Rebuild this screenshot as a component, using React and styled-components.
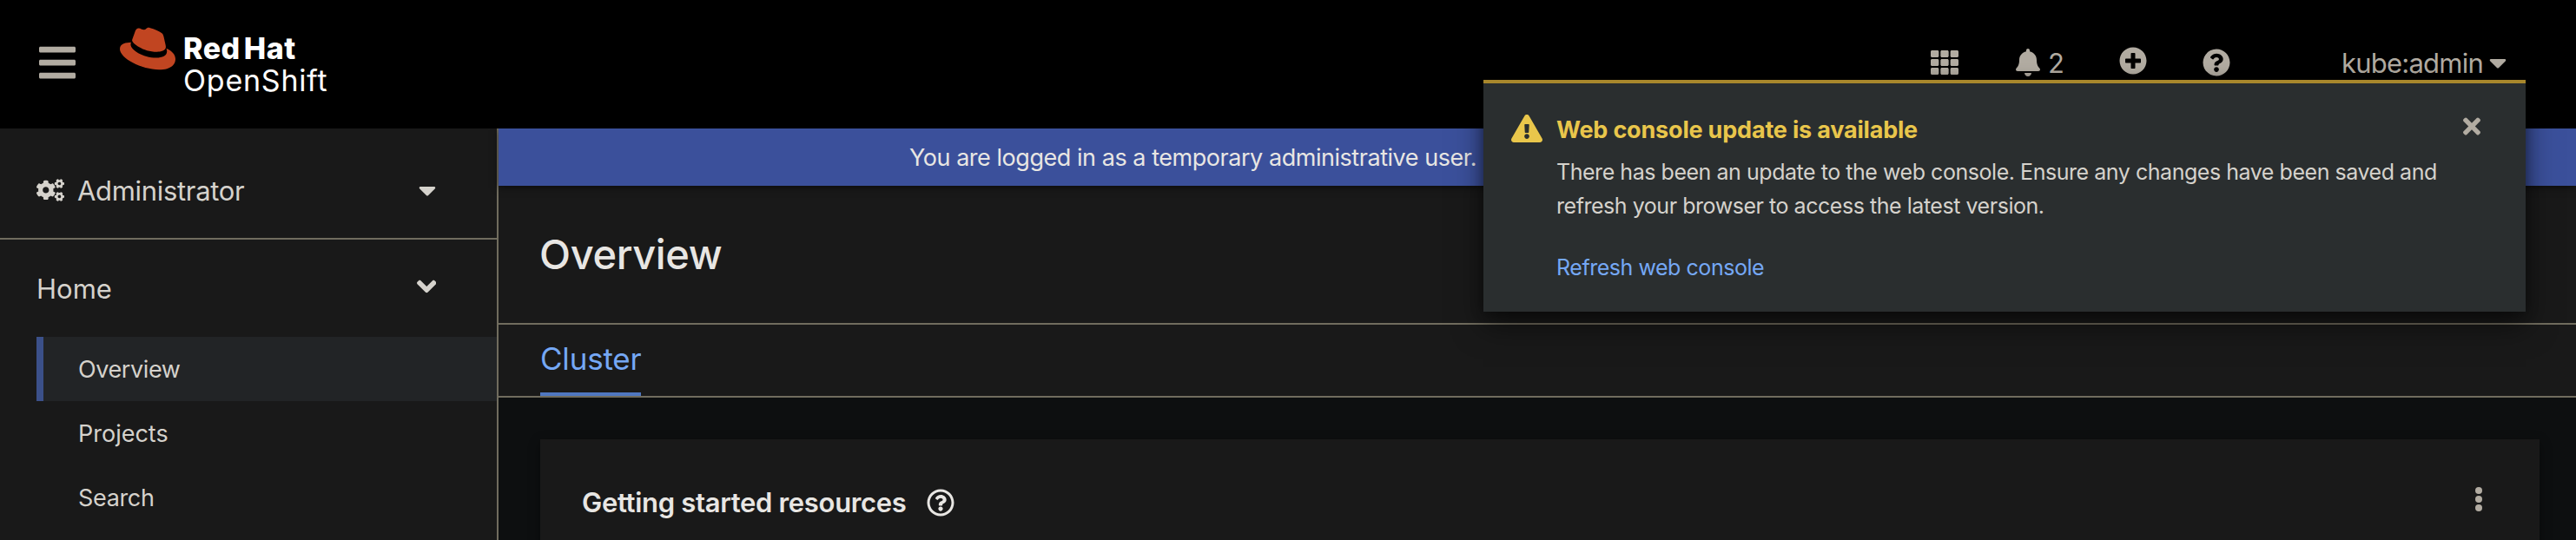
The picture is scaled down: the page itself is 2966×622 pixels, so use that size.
import React from "react";
import styled, { createGlobalStyle } from "styled-components";
import {
  FaAngleDown,
  FaBars,
  FaBell,
  FaCaretDown,
  FaCogs,
  FaExclamationTriangle,
  FaPlusCircle,
  FaQuestionCircle,
  FaRedhat,
  FaRegQuestionCircle,
  FaTh,
  FaTimes,
} from "react-icons/fa";

const color = {
  text: "#e8e6e3",
  nav: "#d5d2cc",
  muted: "#b2aca2",
  line: "#706c5e",
  panel: "#191919",
  canvas: "#0d0f10",
  banner: "#3b509b",
  link: "#75a8f5",
  warning: "#e9c64b",
};

const GlobalStyle = createGlobalStyle`
  *, *::before, *::after { box-sizing: border-box; }
  body {
    margin: 0;
    background: ${color.canvas};
    color: ${color.text};
    font-family: Inter, "Liberation Sans", sans-serif;
    overflow: hidden;
  }
  h1, h2, p { margin: 0; }
  button { font: inherit; color: inherit; background: none; border: 0; padding: 0; }
`;

const Icon = styled.span`
  flex: none;
  display: block;
  svg {
    display: block;
    width: ${(p) => p.$w || 32}px;
    height: ${(p) => p.$h || 32}px;
  }
`;

const Page = styled.div`
  position: relative;
  height: 622px;
  display: flex;
  flex-direction: column;
  overflow: hidden;
`;

const Masthead = styled.header`
  flex: none;
  height: 148px;
  background: #000;
  display: flex;
  align-items: flex-start;
`;

const MenuButton = styled.button`
  margin: 48px 0 0 45px;
  color: ${color.muted};
`;

const Brand = styled.div`
  display: flex;
  align-items: flex-start;
  margin-left: 51px;
  color: #fff;
`;

const BrandHat = styled(Icon)`
  margin-top: 24px;
  color: #c14521;
`;

const BrandName = styled.div`
  margin: 38px 0 0 9px;
  font-size: 34px;
  line-height: 36px;
  white-space: nowrap;
`;

const BrandCompany = styled.div`
  font-weight: 800;
  letter-spacing: 0.5px;
  word-spacing: -4px;
`;

const BrandProduct = styled.div`
  margin-top: 1px;
  letter-spacing: 0.78px;
`;

const Tools = styled.div`
  display: flex;
  margin: 48px 80px 0 auto;
  height: 48px;
  color: ${color.muted};
  font-size: 31px;
`;

const Tool = styled.button`
  width: ${(p) => p.$width || 96}px;
  height: ${(p) => (p.$raised ? 44 : 48)}px;
  display: flex;
  align-items: center;
  justify-content: center;
`;

const Notifications = styled.button`
  width: 121px;
  padding-left: 34px;
  display: flex;
  align-items: center;
`;

const Count = styled.span`
  margin-left: 9px;
`;

const User = styled.button`
  display: flex;
  align-items: center;
  padding-left: 96px;
`;

const UserName = styled.span`
  width: 170px;
  text-align: left;
  white-space: nowrap;
  letter-spacing: -0.77px;
`;

const Body = styled.div`
  flex: 1;
  min-height: 0;
  display: flex;
`;

const Sidebar = styled.nav`
  flex: none;
  width: 574px;
  background: ${color.panel};
  border-right: 2px solid ${color.line};
  color: ${color.nav};
`;

const Perspective = styled.button`
  width: 100%;
  height: 128px;
  padding: 44px 70px 28px 42px;
  border-bottom: 2px solid ${color.line};
  display: flex;
  align-items: center;
  font-size: 31px;
  letter-spacing: -0.32px;
`;

const PerspectiveName = styled.span`
  margin-left: 15px;
  margin-right: auto;
`;

const Section = styled.button`
  width: 100%;
  height: 112px;
  padding: 1px 70px 0 42px;
  display: flex;
  align-items: center;
  justify-content: space-between;
  font-size: 31px;
`;

const SectionChevron = styled(Icon)`
  margin-top: -5px;
`;

const NavItem = styled.a`
  height: 74px;
  margin-left: 42px;
  padding-left: 40px;
  border-left: 8px solid ${(p) => (p.$current ? "#3b5089" : "transparent")};
  background: ${(p) => (p.$current ? "#222426" : "transparent")};
  display: flex;
  align-items: center;
  font-size: 27px;
  letter-spacing: ${(p) => p.$tracking}px;
`;

const Main = styled.main`
  flex: 1;
  min-width: 0;
  display: flex;
  flex-direction: column;
`;

const Banner = styled.div`
  position: relative;
  height: 66px;
  padding-left: 473px;
  background: ${color.banner};
  box-shadow: 0 2px 8px rgba(0, 0, 0, 0.55);
  display: flex;
  align-items: center;
  font-size: 27px;
  letter-spacing: -0.46px;
`;

const PageHeader = styled.div`
  height: 160px;
  padding: 0 0 2px 47px;
  background: ${color.panel};
  border-bottom: 2px solid ${color.line};
  display: flex;
  align-items: center;
`;

const PageTitle = styled.h1`
  font-size: 47px;
  font-weight: 500;
  letter-spacing: -0.37px;
`;

const Tabs = styled.div`
  height: 84px;
  padding-left: 48px;
  background: ${color.panel};
  border-bottom: 2px solid ${color.line};
  display: flex;
`;

const Tab = styled.button`
  width: 116px;
  border-bottom: 4px solid #4f77c0;
  color: ${color.link};
  font-size: 35px;
  letter-spacing: -0.2px;
  text-align: left;
  white-space: nowrap;
`;

const Content = styled.div`
  flex: 1;
  min-height: 0;
  padding: 48px 42px 0 48px;
`;

const Card = styled.section`
  height: 320px;
  background: ${color.panel};
  box-shadow: 0 4px 12px rgba(0, 0, 0, 0.4);
`;

const CardHeader = styled.div`
  height: 145px;
  padding: 0 66px 0 48px;
  display: flex;
  align-items: center;
`;

const CardTitle = styled.h2`
  width: 397px;
  font-size: 31px;
  font-weight: 600;
  letter-spacing: -0.32px;
  white-space: nowrap;
`;

const Kebab = styled.button`
  margin: -7px 0 0 auto;
  display: flex;
  flex-direction: column;
  gap: 1.7px;
  span {
    width: 8px;
    height: 8px;
    border-radius: 50%;
    background: ${color.muted};
  }
`;

const Toast = styled.aside`
  position: absolute;
  top: 92px;
  right: 58px;
  width: 1200px;
  height: 267px;
  padding: 32px 52px 32px 32px;
  border-top: 4px solid #a8872c;
  background: #2a2e2f;
  box-shadow: 0 16px 32px rgba(0, 0, 0, 0.5), 0 0 12px rgba(0, 0, 0, 0.35);
  display: flex;
  align-items: flex-start;
`;

const WarningIcon = styled(Icon)`
  margin-top: 4px;
  color: ${color.warning};
`;

const ToastText = styled.div`
  margin: 1px 0 0 16px;
  flex: 1;
  font-size: 25px;
  line-height: 39px;
  letter-spacing: -0.46px;
  color: ${color.nav};
  white-space: nowrap;
`;

const ToastTitle = styled.h2`
  color: ${color.warning};
  font-size: 27px;
  font-weight: 700;
  line-height: 42px;
  letter-spacing: -0.19px;
  margin-bottom: 8px;
`;

const ToastLink = styled.a`
  display: block;
  margin-top: 32px;
  color: ${color.link};
`;

const CloseButton = styled.button`
  margin-top: 3px;
  color: ${color.muted};
`;

const navItems = [
  { label: "Overview", current: true, tracking: -0.4 },
  { label: "Projects", tracking: 0 },
  { label: "Search", tracking: -0.34 },
];

export default function App() {
  return (
    <Page>
      <GlobalStyle />
      <Masthead>
        <MenuButton aria-label="Toggle navigation">
          <Icon $w={42} $h={48}><FaBars /></Icon>
        </MenuButton>
        <Brand>
          <BrandHat $w={64} $h={64}><FaRedhat /></BrandHat>
          <BrandName>
            <BrandCompany>Red Hat</BrandCompany>
            <BrandProduct>OpenShift</BrandProduct>
          </BrandName>
        </Brand>
        <Tools>
          <Tool aria-label="Applications">
            <Icon><FaTh /></Icon>
          </Tool>
          <Notifications aria-label="Notifications">
            <Icon $w={28}><FaBell /></Icon>
            <Count>2</Count>
          </Notifications>
          <Tool $raised aria-label="Create">
            <Icon><FaPlusCircle /></Icon>
          </Tool>
          <Tool aria-label="Help">
            <Icon><FaQuestionCircle /></Icon>
          </Tool>
          <User>
            <UserName>kube:admin</UserName>
            <Icon $w={20}><FaCaretDown /></Icon>
          </User>
        </Tools>
      </Masthead>

      <Body>
        <Sidebar>
          <Perspective>
            <Icon><FaCogs /></Icon>
            <PerspectiveName>Administrator</PerspectiveName>
            <Icon $w={20}><FaCaretDown /></Icon>
          </Perspective>
          <Section>
            Home
            <SectionChevron $w={22.5} $h={36}><FaAngleDown /></SectionChevron>
          </Section>
          {navItems.map((item) => (
            <NavItem key={item.label} $current={item.current} $tracking={item.tracking}>
              {item.label}
            </NavItem>
          ))}
        </Sidebar>

        <Main>
          <Banner>You are logged in as a temporary administrative user.</Banner>
          <PageHeader>
            <PageTitle>Overview</PageTitle>
          </PageHeader>
          <Tabs>
            <Tab>Cluster</Tab>
          </Tabs>
          <Content>
            <Card>
              <CardHeader>
                <CardTitle>Getting started resources</CardTitle>
                <Icon><FaRegQuestionCircle /></Icon>
                <Kebab aria-label="Actions">
                  <span />
                  <span />
                  <span />
                </Kebab>
              </CardHeader>
            </Card>
          </Content>
        </Main>
      </Body>

      <Toast>
        <WarningIcon $w={36}><FaExclamationTriangle /></WarningIcon>
        <ToastText>
          <ToastTitle>Web console update is available</ToastTitle>
          <p>
            There has been an update to the web console. Ensure any changes have been saved and
            <br />
            refresh your browser to access the latest version.
          </p>
          <ToastLink>Refresh web console</ToastLink>
        </ToastText>
        <CloseButton aria-label="Close">
          <Icon $w={20} $h={29}><FaTimes /></Icon>
        </CloseButton>
      </Toast>
    </Page>
  );
}
